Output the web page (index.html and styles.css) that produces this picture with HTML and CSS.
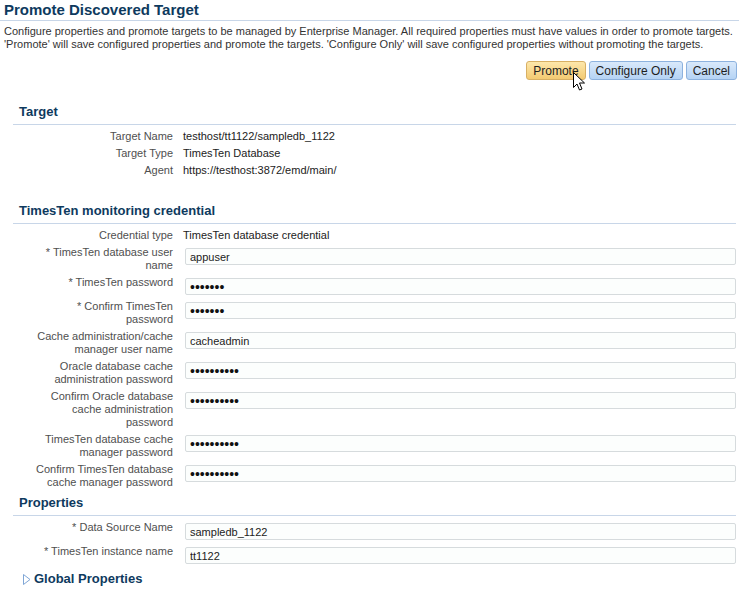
FILE: index.html
```html
<!DOCTYPE html>
<html>
<head>
    <meta charset="utf-8">
    <title>Promote Discovered Target</title>
    <link rel="stylesheet" href="styles.css">
</head>
<body>
    <h1 class="page-title">Promote Discovered Target</h1>

    <div class="intro">
        Configure properties and promote targets to be managed by Enterprise Manager. All required properties must have values in order to promote targets.<br>
        'Promote' will save configured properties and promote the targets. 'Configure Only' will save configured properties without promoting the targets.
    </div>

    <div class="actions">
        <span class="btn-wrap">
            <button type="button" class="btn btn-primary">Promote</button>
            <svg class="pointer" width="14" height="21" viewBox="0 0 14 21">
                <path d="M1.5 1.5 L1.5 16.5 L5 13 L7.5 19 L10 18 L7.5 12 L12.5 12 Z" fill="#fff" stroke="#000" stroke-width="1" stroke-linejoin="miter"/>
            </svg>
        </span>
        <button type="button" class="btn">Configure Only</button>
        <button type="button" class="btn">Cancel</button>
    </div>

    <div class="section section-target">
        <h3 class="section-head">Target</h3>
        <div class="form">
            <div class="label">Target Name</div>
            <div class="value">testhost/tt1122/sampledb_1122</div>
            <div class="label">Target Type</div>
            <div class="value">TimesTen Database</div>
            <div class="label">Agent</div>
            <div class="value">https://testhost:3872/emd/main/</div>
        </div>
    </div>

    <div class="section">
        <h3 class="section-head">TimesTen monitoring credential</h3>
        <div class="form">
            <div class="label">Credential type</div>
            <div class="value">TimesTen database credential</div>

            <div class="label">* TimesTen database user<br>name</div>
            <div class="field"><input type="text" value="appuser"></div>

            <div class="label">* TimesTen password</div>
            <div class="field"><input type="password" value="appuser"></div>

            <div class="label">* Confirm TimesTen<br>password</div>
            <div class="field"><input type="password" value="appuser"></div>

            <div class="label">Cache administration/cache<br>manager user name</div>
            <div class="field"><input type="text" value="cacheadmin"></div>

            <div class="label">Oracle database cache<br>administration password</div>
            <div class="field"><input type="password" value="cacheadmin"></div>

            <div class="label">Confirm Oracle database<br>cache administration<br>password</div>
            <div class="field"><input type="password" value="cacheadmin"></div>

            <div class="label">TimesTen database cache<br>manager password</div>
            <div class="field"><input type="password" value="cacheadmin"></div>

            <div class="label">Confirm TimesTen database<br>cache manager password</div>
            <div class="field"><input type="password" value="cacheadmin"></div>
        </div>
    </div>

    <div class="section section-props">
        <h3 class="section-head">Properties</h3>
        <div class="form">
            <div class="label">* Data Source Name</div>
            <div class="field"><input type="text" value="sampledb_1122"></div>

            <div class="label">* TimesTen instance name</div>
            <div class="field"><input type="text" value="tt1122"></div>
        </div>
    </div>

    <div class="disclosure">
        <svg class="disclosure-icon" width="10" height="13" viewBox="0 0 10 13">
            <path d="M1.5 1.5 L8 6.5 L1.5 11.5 Z" fill="#fff" stroke="#7fa6d6" stroke-width="1"/>
        </svg>
        <span>Global Properties</span>
    </div>
</body>
</html>
```

FILE: styles.css
```css
body {
    margin: 0;
    font-family: "Liberation Sans", Arial, sans-serif;
    font-size: 11px;
    color: #333;
    background: #fff;
}

.page-title {
    margin: 0;
    padding-left: 4px;
    height: 20px;
    line-height: 19px;
    font-size: 15px;
    font-weight: bold;
    color: #0e3a5e;
    border-bottom: 1px solid #c8d6e8;
}

.intro {
    margin-top: 4px;
    padding: 0 4px;
    line-height: 13px;
    color: #333;
}

.actions {
    display: flex;
    justify-content: flex-end;
    gap: 3px;
    margin-top: 10px;
    padding-right: 2px;
}

.btn-wrap {
    position: relative;
    display: flex;
}

.btn {
    height: 19px;
    padding: 0 6px;
    font-family: "Liberation Sans", Arial, sans-serif;
    font-size: 12px;
    color: #1e1e1e;
    border: 1px solid #8db2de;
    border-radius: 3px;
    background: linear-gradient(#d9e9fb, #b5d3f4);
    cursor: pointer;
}

.btn-primary {
    border-color: #d8b064;
    background: linear-gradient(#fde7ab, #f3ca72);
}

.pointer {
    position: absolute;
    left: 46px;
    top: 10px;
}

.section {
    margin: 6px 3px 0 13px;
}

.section-target {
    margin-top: 24px;
    margin-bottom: 26px;
}

.section-head {
    margin: 0;
    padding: 0 0 4px 6px;
    line-height: 16px;
    font-size: 13px;
    font-weight: bold;
    color: #0e3a5e;
    border-bottom: 1px solid #c8d6e8;
}

.form {
    display: grid;
    grid-template-columns: 160px 1fr;
    column-gap: 10px;
    row-gap: 4px;
    margin-top: 5px;
}

.label {
    text-align: right;
    line-height: 13px;
    color: #4f4f4f;
}

.value {
    line-height: 13px;
    color: #222;
}

.field {
    height: 20px;
}

.field input {
    box-sizing: border-box;
    display: block;
    width: calc(100% - 2px);
    height: 17px;
    margin: 2px 0 1px 2px;
    padding: 0 4px;
    font-family: "Liberation Sans", Arial, sans-serif;
    font-size: 11px;
    color: #222;
    background: #fcfefd;
    border: 1px solid #d6dbdd;
    border-radius: 2px;
    outline: none;
}

.field input[type="password"] {
    font-size: 14px;
    color: #111;
}

.disclosure {
    display: flex;
    align-items: center;
    gap: 2px;
    margin: 6px 0 0 22px;
    line-height: 16px;
    font-size: 13px;
    font-weight: bold;
    color: #0e3a5e;
}

.disclosure-icon {
    display: block;
}
```
